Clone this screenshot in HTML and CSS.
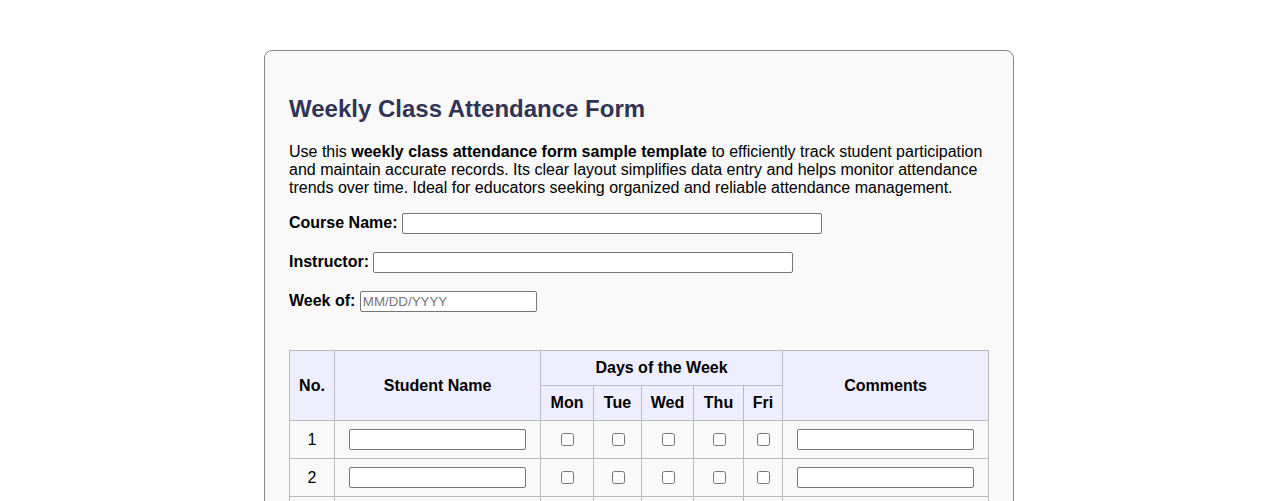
FILE: index.html
```html
<!DOCTYPE html>
<html lang="en">
<head>
<meta charset="utf-8">
<title>Weekly Class Attendance Form</title>
<link rel="stylesheet" href="styles.css">
</head>
<body>
<div class="form-container">
  <h2 class="title">Weekly Class Attendance Form</h2>
  <p class="intro">Use this <strong>weekly class attendance form sample template</strong> to efficiently track student participation and maintain accurate records. Its clear layout simplifies data entry and helps monitor attendance trends over time. Ideal for educators seeking organized and reliable attendance management.</p>
  <div class="field"><label class="field-label">Course Name:</label><input class="field-input wide" type="text"></div>
  <div class="field"><label class="field-label">Instructor:</label><input class="field-input wide" type="text"></div>
  <div class="field"><label class="field-label">Week of:</label><input class="field-input" type="text" placeholder="MM/DD/YYYY"></div>
  <table class="attendance">
    <colgroup>
      <col class="c-no"><col class="c-name"><col class="c-mon"><col class="c-tue"><col class="c-wed"><col class="c-thu"><col class="c-fri"><col class="c-com">
    </colgroup>
    <thead>
      <tr>
        <th rowspan="2">No.</th>
        <th rowspan="2">Student Name</th>
        <th colspan="5">Days of the Week</th>
        <th rowspan="2">Comments</th>
      </tr>
      <tr>
        <th>Mon</th><th>Tue</th><th>Wed</th><th>Thu</th><th>Fri</th>
      </tr>
    </thead>
    <tbody>
      <tr><td>1</td><td><input class="cell-input" type="text"></td><td><input type="checkbox"></td><td><input type="checkbox"></td><td><input type="checkbox"></td><td><input type="checkbox"></td><td><input type="checkbox"></td><td><input class="cell-input" type="text"></td></tr>
      <tr><td>2</td><td><input class="cell-input" type="text"></td><td><input type="checkbox"></td><td><input type="checkbox"></td><td><input type="checkbox"></td><td><input type="checkbox"></td><td><input type="checkbox"></td><td><input class="cell-input" type="text"></td></tr>
      <tr><td>3</td><td><input class="cell-input" type="text"></td><td><input type="checkbox"></td><td><input type="checkbox"></td><td><input type="checkbox"></td><td><input type="checkbox"></td><td><input type="checkbox"></td><td><input class="cell-input" type="text"></td></tr>
      <tr><td>4</td><td><input class="cell-input" type="text"></td><td><input type="checkbox"></td><td><input type="checkbox"></td><td><input type="checkbox"></td><td><input type="checkbox"></td><td><input type="checkbox"></td><td><input class="cell-input" type="text"></td></tr>
      <tr><td>5</td><td><input class="cell-input" type="text"></td><td><input type="checkbox"></td><td><input type="checkbox"></td><td><input type="checkbox"></td><td><input type="checkbox"></td><td><input type="checkbox"></td><td><input class="cell-input" type="text"></td></tr>
    </tbody>
  </table>
</div>
</body>
</html>
```
FILE: styles.css
```css
html, body {
  margin: 0;
  padding: 0;
  background: #ffffff;
}
body {
  font-family: "Liberation Sans", Arial, sans-serif;
  font-size: 16px;
  color: #000;
}
.form-container {
  width: 700px;
  margin: 50px auto 40px;
  padding: 24px;
  border: 1px solid #888;
  border-radius: 8px;
  background: #f9f9f9;
}
.title {
  font-size: 24px;
  font-weight: bold;
  color: #333355;
  margin: 20px 0 20px;
}
.intro {
  margin: 0 0 16px;
  line-height: 18px;
}
.field {
  display: flex;
  align-items: flex-start;
  gap: 4.4px;
  height: 21px;
  margin-bottom: 18px;
}
.field-label {
  font-weight: bold;
  line-height: 18px;
  padding-top: 0.5px;
}
.field-input, .cell-input {
  box-sizing: border-box;
  width: 177px;
  height: 21px;
  margin: 0;
  padding: 1px 2px;
  border: 1px solid #767676;
  border-radius: 2px;
  background: #fff;
  font-family: "Liberation Sans", Arial, sans-serif;
  font-size: 13.333px;
}
.field-input::placeholder {
  color: #757575;
}
.field-input.wide {
  width: 420px;
}
.attendance {
  width: 699px;
  margin-top: 38px;
  border-collapse: collapse;
  table-layout: fixed;
}
.c-no { width: 45px; }
.c-name { width: 206px; }
.c-mon { width: 53px; }
.c-tue { width: 48px; }
.c-wed { width: 52px; }
.c-thu { width: 50px; }
.c-fri { width: 39px; }
.c-com { width: 206px; }
.attendance th,
.attendance td {
  border: 1px solid #bbb;
  padding: 8px;
  text-align: center;
  vertical-align: middle;
  line-height: 18px;
}
.attendance th {
  background: #eeeeff;
  font-weight: bold;
}
.cell-input {
  display: block;
  margin: 0 auto;
}
.attendance input[type="checkbox"] {
  width: 13px;
  height: 13px;
  margin: 3px 3px 3px 4px;
  vertical-align: middle;
}
```
